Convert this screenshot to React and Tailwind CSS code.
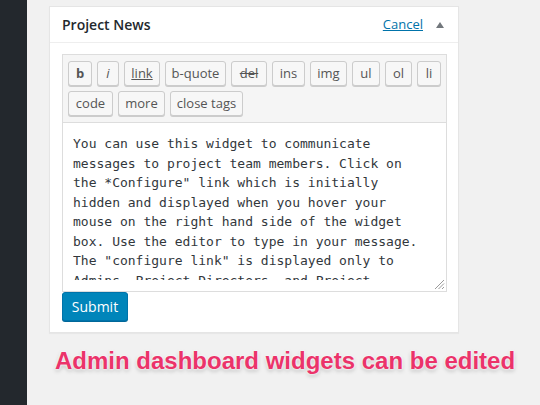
import React from "react";

const row1 = [
  { t: "b", w: "w-[24px]", c: "font-bold" },
  { t: "i", w: "w-[22px]", c: "italic" },
  { t: "link", w: "w-[36px]", c: "underline" },
  { t: "b-quote", w: "w-[61px]", c: "" },
  { t: "del", w: "w-[36px]", c: "line-through" },
  { t: "ins", w: "w-[33px]", c: "" },
  { t: "img", w: "w-[37px]", c: "" },
  { t: "ul", w: "w-[28px]", c: "" },
  { t: "ol", w: "w-[27px]", c: "" },
  { t: "li", w: "w-[24px]", c: "" },
  { t: "code", w: "w-[45px]", c: "" },
  { t: "more", w: "w-[47px]", c: "" },
  { t: "close tags", w: "w-[73px]", c: "" },
];

const lines = [
  "You can use this widget to communicate",
  "messages to project team members. Click on",
  "the *Configure\" link which is initially",
  "hidden and displayed when you hover your",
  "mouse on the right hand side of the widget",
  "box. Use the editor to type in your message.",
  "The \"configure link\" is displayed only to",
  "Admins, Project Directors, and Project",
];

export default function App() {
  return (
    <div className="w-[540px] h-[405px] flex bg-[#f1f1f1] overflow-hidden font-['Open_Sans',sans-serif]">
      <div className="w-[27px] h-full bg-[#23282d] shrink-0" />
      <div className="pl-[22px] pt-[6px]">
        <div className="w-[410px] border border-[#e5e5e5] bg-white shadow-[0_1px_1px_rgba(0,0,0,0.04)]">
          <div className="h-[36px] border-b border-[#eeeeee] flex items-center pl-[12px] pr-[14px]">
            <div className="text-[14px] font-semibold text-[#23282d] flex-1">Project News</div>
            <a className="text-[13px] text-[#0073aa] underline mr-[13px]">Cancel</a>
            <svg width="8" height="6" viewBox="0 0 8 6" className="mt-[1px]">
              <polygon points="4,0 8,6 0,6" fill="#72777c" />
            </svg>
          </div>
          <div className="pl-[12px] pr-[11px] pt-[11px] pb-[11px]">
            <div className="border border-b-0 border-[#dddddd] bg-[#f5f5f5] pl-[5px] pr-[4px] pt-[6px] pb-[6px] flex flex-wrap gap-x-[5px] gap-y-[5px]">
              {row1.map((b) => (
                <div
                  key={b.t}
                  className={`${b.w} h-[25px] flex items-center justify-center border border-[#cccccc] bg-[#f7f7f7] rounded-[3px] text-[13px] text-[#555555] shadow-[0_1px_0_#cccccc] ${b.c}`}
                >
                  {b.t}
                </div>
              ))}
            </div>
            <div className="relative w-[385px] h-[170px] border border-[#dddddd] bg-white pl-[10px] pr-[6px] pt-[11px]">
              <div className="h-[146px] overflow-hidden font-['DejaVu_Sans_Mono',monospace] text-[13px] leading-[19.5px] text-[#32373c] whitespace-pre">
                {lines.map((l, i) => (
                  <div key={i}>{l}</div>
                ))}
              </div>
              <svg width="12" height="12" viewBox="0 0 12 12" className="absolute right-[1px] bottom-[1px]">
                <line x1="11" y1="2" x2="2" y2="11" stroke="#9a9a9a" strokeWidth="1" />
                <line x1="11" y1="5.5" x2="5.5" y2="11" stroke="#9a9a9a" strokeWidth="1" />
                <line x1="11" y1="9" x2="9" y2="11" stroke="#9a9a9a" strokeWidth="1" />
              </svg>
            </div>
            <div className="w-[66px] h-[29px] flex items-center justify-center bg-[#0085ba] border border-[#0073aa] rounded-[3px] text-white text-[14px] shadow-[0_1px_0_#006799]">
              Submit
            </div>
          </div>
        </div>
        <div className="mt-[14px] ml-[6px] text-[24px] leading-[28px] font-bold text-[#eb336a] font-['Liberation_Sans',Arial,sans-serif] whitespace-nowrap [text-shadow:0_0_2px_#ffffff,0_0_3px_#ffffff,0_2px_4px_rgba(0,0,0,0.25)]">
          Admin dashboard widgets can be edited
        </div>
      </div>
    </div>
  );
}
